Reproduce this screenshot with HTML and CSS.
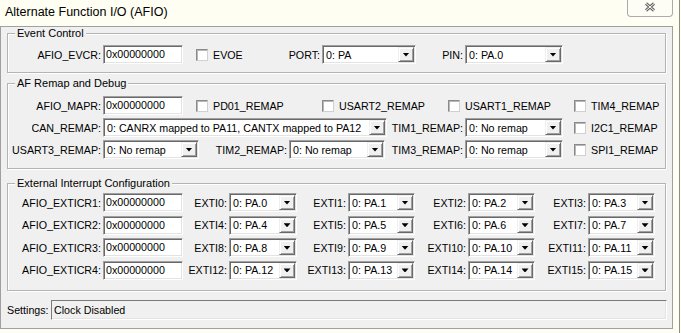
FILE: index.html
```html
<!DOCTYPE html>
<html lang="en">
<head>
    <meta charset="UTF-8">
    <title>Alternate Function I/O (AFIO)</title>
    <link rel="stylesheet" href="styles.css">
</head>
<body>
    <div class="screen">
        <div class="titlebar">
            <span class="title">Alternate Function I/O (AFIO)</span>
            <div class="close">
                <svg width="12" height="10" viewBox="0 0 12 10">
                    <path d="M2 1.5 L10 8.5 M10 1.5 L2 8.5" stroke="#6b6b6b" stroke-width="3" fill="none"/>
                    <path d="M2 1.5 L10 8.5 M10 1.5 L2 8.5" stroke="#fdfdf6" stroke-width="1" fill="none"/>
                </svg>
            </div>
        </div>

        <div class="dialog">
            <!-- Event Control -->
            <fieldset class="group g-event">
                <legend>Event Control</legend>
                <div class="row">
                    <label class="lbl w95">AFIO_EVCR:</label>
                    <div class="edit w80">0x00000000</div>
                    <div class="check ml13 w88"><span class="box"></span>EVOE</div>
                    <label class="lbl w38">PORT:</label>
                    <div class="combo w94"><span class="val">0: PA</span><span class="drop"></span></div>
                    <label class="lbl w49">PIN:</label>
                    <div class="combo w98"><span class="val">0: PA.0</span><span class="drop"></span></div>
                </div>
            </fieldset>

            <!-- AF Remap and Debug -->
            <fieldset class="group g-remap">
                <legend>AF Remap and Debug</legend>
                <div class="row">
                    <label class="lbl w95">AFIO_MAPR:</label>
                    <div class="edit w80">0x00000000</div>
                    <div class="check ml13 w126"><span class="box"></span>PD01_REMAP</div>
                    <div class="check w126"><span class="box"></span>USART2_REMAP</div>
                    <div class="check w126"><span class="box"></span>USART1_REMAP</div>
                    <div class="check"><span class="box"></span>TIM4_REMAP</div>
                </div>
                <div class="row">
                    <label class="lbl can">CAN_REMAP:</label>
                    <div class="combo w284"><span class="val">0: CANRX mapped to PA11, CANTX mapped to PA12</span><span class="drop"></span></div>
                    <label class="lbl w78">TIM1_REMAP:</label>
                    <div class="combo w98"><span class="val">0: No remap</span><span class="drop"></span></div>
                    <div class="check ml11"><span class="box"></span>I2C1_REMAP</div>
                </div>
                <div class="row">
                    <label class="lbl w95">USART3_REMAP:</label>
                    <div class="combo w96"><span class="val">0: No remap</span><span class="drop"></span></div>
                    <label class="lbl w90">TIM2_REMAP:</label>
                    <div class="combo w96"><span class="val">0: No remap</span><span class="drop"></span></div>
                    <label class="lbl w80">TIM3_REMAP:</label>
                    <div class="combo w98"><span class="val">0: No remap</span><span class="drop"></span></div>
                    <div class="check ml11"><span class="box"></span>SPI1_REMAP</div>
                </div>
            </fieldset>

            <!-- External Interrupt Configuration -->
            <fieldset class="group g-exti">
                <legend>External Interrupt Configuration</legend>
                <div class="exti-grid">
                    <label class="lbl">AFIO_EXTICR1:</label>
                    <div class="edit">0x00000000</div>
                    <label class="lbl">EXTI0:</label>
                    <div class="combo"><span class="val">0: PA.0</span><span class="drop"></span></div>
                    <label class="lbl">EXTI1:</label>
                    <div class="combo"><span class="val">0: PA.1</span><span class="drop"></span></div>
                    <label class="lbl">EXTI2:</label>
                    <div class="combo"><span class="val">0: PA.2</span><span class="drop"></span></div>
                    <label class="lbl">EXTI3:</label>
                    <div class="combo"><span class="val">0: PA.3</span><span class="drop"></span></div>

                    <label class="lbl">AFIO_EXTICR2:</label>
                    <div class="edit">0x00000000</div>
                    <label class="lbl">EXTI4:</label>
                    <div class="combo"><span class="val">0: PA.4</span><span class="drop"></span></div>
                    <label class="lbl">EXTI5:</label>
                    <div class="combo"><span class="val">0: PA.5</span><span class="drop"></span></div>
                    <label class="lbl">EXTI6:</label>
                    <div class="combo"><span class="val">0: PA.6</span><span class="drop"></span></div>
                    <label class="lbl">EXTI7:</label>
                    <div class="combo"><span class="val">0: PA.7</span><span class="drop"></span></div>

                    <label class="lbl">AFIO_EXTICR3:</label>
                    <div class="edit">0x00000000</div>
                    <label class="lbl">EXTI8:</label>
                    <div class="combo"><span class="val">0: PA.8</span><span class="drop"></span></div>
                    <label class="lbl">EXTI9:</label>
                    <div class="combo"><span class="val">0: PA.9</span><span class="drop"></span></div>
                    <label class="lbl">EXTI10:</label>
                    <div class="combo"><span class="val">0: PA.10</span><span class="drop"></span></div>
                    <label class="lbl">EXTI11:</label>
                    <div class="combo"><span class="val">0: PA.11</span><span class="drop"></span></div>

                    <label class="lbl">AFIO_EXTICR4:</label>
                    <div class="edit">0x00000000</div>
                    <label class="lbl">EXTI12:</label>
                    <div class="combo"><span class="val">0: PA.12</span><span class="drop"></span></div>
                    <label class="lbl">EXTI13:</label>
                    <div class="combo"><span class="val">0: PA.13</span><span class="drop"></span></div>
                    <label class="lbl">EXTI14:</label>
                    <div class="combo"><span class="val">0: PA.14</span><span class="drop"></span></div>
                    <label class="lbl">EXTI15:</label>
                    <div class="combo"><span class="val">0: PA.15</span><span class="drop"></span></div>
                </div>
            </fieldset>

            <!-- status line -->
            <div class="settings">
                <span class="settings-label">Settings:</span>
                <div class="status">Clock Disabled</div>
            </div>
        </div>
    </div>
</body>
</html>
```

FILE: styles.css
```css
* {
    margin: 0;
    padding: 0;
    box-sizing: border-box;
}

body {
    font-family: "Liberation Sans", Arial, sans-serif;
    font-size: 10.7px;
    color: #000;
    background: #fefef2;
    overflow: hidden;
}

.screen {
    width: 680px;
    height: 333px;
    border-right: 1px solid #8c8c8c;
}

.titlebar {
    width: 673px;
    height: 26px;
    display: flex;
    justify-content: space-between;
    align-items: flex-start;
}

.title {
    font-size: 12.5px;
    padding: 5px 0 0 5px;
    color: #000;
}

.close {
    width: 46px;
    height: 17px;
    border: 1px solid #ababab;
    border-top: none;
    border-radius: 0 0 4px 4px;
    background: #fdfdf6;
    display: flex;
    justify-content: center;
    align-items: center;
    padding-bottom: 2px;
}

.dialog {
    width: 673px;
    background: #f0f0f0;
    border: 1px solid #a0a0a0;
    padding-bottom: 8px;
}

/* group boxes */
.group {
    width: 659px;
    margin-left: 6px;
    padding: 0;
    border: 1px solid #b4b4b4;
    box-shadow: 1px 1px 0 #fff, inset 1px 1px 0 #fff;
}

.group legend {
    margin-left: 7px;
    padding: 0 2px;
    line-height: 13px;
    font-size: 11px;
    background: #f0f0f0;
    position: relative;
}

.g-event {
    padding-bottom: 8px;
}

.g-event .row {
    margin-top: 5px;
}

.g-remap {
    margin-top: 4px;
    padding-bottom: 9px;
}

.g-remap .row {
    margin-top: 3px;
}

.g-remap .row:first-of-type {
    margin-top: 6px;
}

.g-exti {
    margin-top: 8px;
    padding-bottom: 10px;
}

.row {
    display: flex;
    align-items: center;
    height: 19px;
}

.lbl {
    flex: none;
    display: flex;
    justify-content: flex-end;
    padding-right: 2px;
    white-space: nowrap;
    overflow: hidden;
}

.lbl.can {
    margin-left: 24px;
    width: 71px;
}

/* edit box */
.edit {
    flex: none;
    height: 19px;
    background: #fff;
    border: 1px solid;
    border-color: #a0a0a0 #fff #fff #a0a0a0;
    box-shadow: inset 1px 1px 0 #696969, inset -1px -1px 0 #e3e3e3;
    padding: 0 0 1px 2px;
    display: flex;
    align-items: center;
    white-space: nowrap;
}

/* drop-down list */
.combo {
    flex: none;
    height: 19px;
    background: #fff;
    border: 1px solid;
    border-color: #a0a0a0 #fff #fff #a0a0a0;
    box-shadow: inset 1px 1px 0 #696969, inset -1px -1px 0 #e3e3e3;
    padding: 1px;
    display: flex;
    align-items: stretch;
}

.combo .val {
    flex: 1;
    overflow: hidden;
    white-space: nowrap;
    padding-left: 2px;
    display: flex;
    align-items: center;
}

.combo .drop {
    flex: none;
    width: 16px;
    background: #f0f0f0;
    border: 1px solid;
    border-color: #f0f0f0 #696969 #696969 #f0f0f0;
    box-shadow: inset 1px 1px 0 #fff, inset -1px -1px 0 #a0a0a0;
    display: flex;
    justify-content: center;
    align-items: center;
}

.combo .drop::after {
    content: "";
    width: 7px;
    height: 4px;
    background: #000;
    clip-path: polygon(0 0, 100% 0, 50% 100%);
}

/* check box */
.check {
    flex: none;
    display: flex;
    align-items: center;
    white-space: nowrap;
}

.check .box {
    width: 12px;
    height: 12px;
    margin-right: 5px;
    background: #fff;
    border: 1px solid;
    border-color: #8a8a8a #d0d0d0 #d0d0d0 #8a8a8a;
    box-shadow: inset 1px 1px 0 #b8b8b8;
}

.ml11 { margin-left: 11px; }
.ml13 { margin-left: 13px; }

.w38 { width: 38px; }
.w49 { width: 49px; }
.w78 { width: 78px; }
.w80 { width: 80px; }
.w88 { width: 88px; }
.w90 { width: 90px; }
.w94 { width: 94px; }
.w95 { width: 95px; }
.w96 { width: 96px; }
.w98 { width: 98px; }
.w126 { width: 126px; }
.w284 { width: 284px; }

/* EXTI table */
.exti-grid {
    display: grid;
    grid-template-columns: 95px 80px 46px 68px 51px 67px 53px 67px 53px 67px;
    grid-auto-rows: 19px;
    row-gap: 3.67px;
    align-items: center;
    margin-top: 3px;
}

/* settings line */
.settings {
    display: flex;
    align-items: center;
    margin-top: 9px;
    height: 20px;
}

.settings-label {
    width: 44px;
    margin-left: 6px;
}

.status {
    width: 616px;
    height: 20px;
    border: 1px solid;
    border-color: #7a7a7a #fff #fff #7a7a7a;
    box-shadow: inset -1px -1px 0 #e3e3e3;
    padding-left: 2px;
    display: flex;
    align-items: center;
}
```
